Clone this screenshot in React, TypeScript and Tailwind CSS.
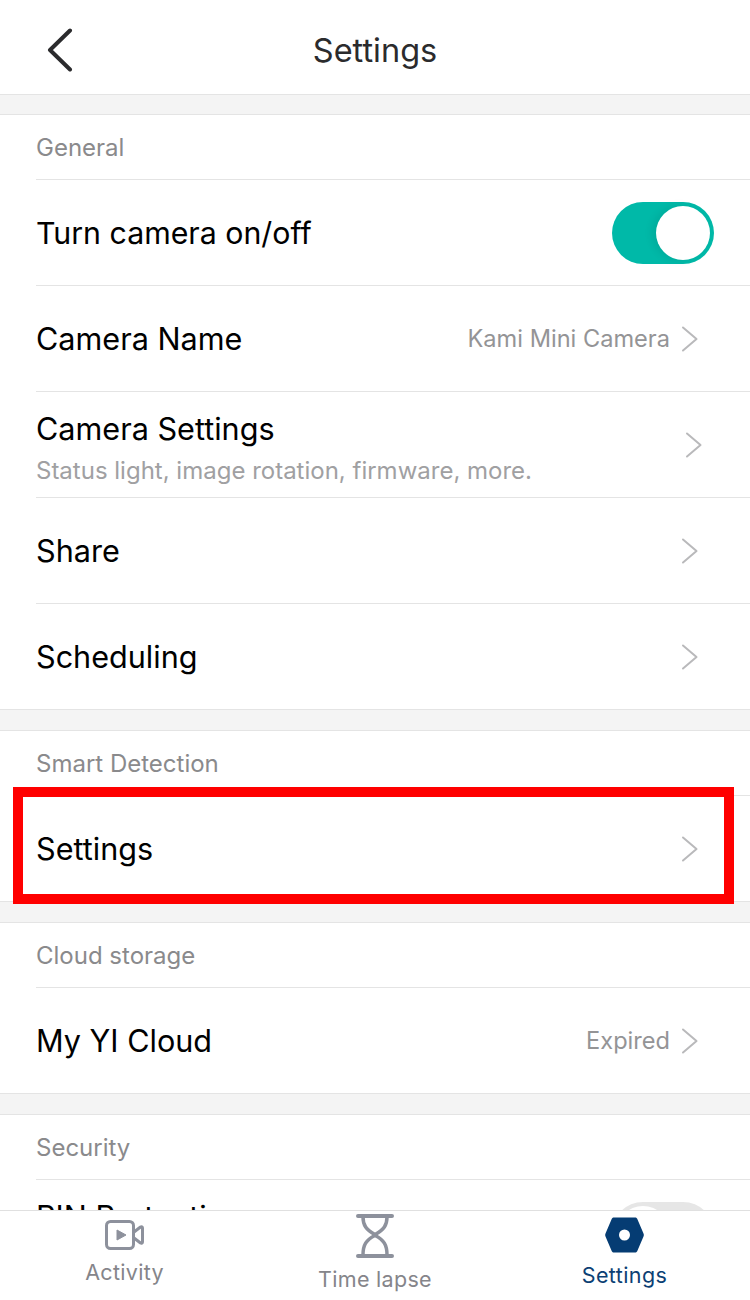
import { ReactNode } from 'react';

function Chevron() {
  return (
    <svg width="18" height="26" viewBox="0 0 18 26" fill="none" className="shrink-0">
      <path d="M2 1.5 15.5 13 2 24.5" stroke="#b9b9bb" strokeWidth="2" strokeLinecap="round" strokeLinejoin="round" />
    </svg>
  );
}

function SectionLabel({ children }: { children: ReactNode }) {
  return (
    <div className="ml-[36px] flex h-[65px] items-center border-b border-[#e4e4e4] pt-[2px] text-[24px] text-[#8a8a8c]">
      {children}
    </div>
  );
}

function Row({
  title,
  value,
  sub,
  last,
}: {
  title: string;
  value?: string;
  sub?: string;
  last?: boolean;
}) {
  return (
    <div className={`ml-[36px] flex items-center pr-[51px] ${last ? 'h-[105px]' : 'h-[106px] border-b border-[#e4e4e4]'}`}>
      <div className={`min-w-0 flex-1 ${sub ? 'pt-[6px]' : ''}`}>
        <div className="text-[30.6px] leading-[38px] text-black">{title}</div>
        {sub && <div className="mt-[8px] text-[24px] leading-[30px] text-[#a0a0a2]">{sub}</div>}
      </div>
      {value && <span className="mr-[11px] text-[23.6px] text-[#949496]">{value}</span>}
      <span className={sub ? 'translate-x-[4px]' : ''}>
        <Chevron />
      </span>
    </div>
  );
}

function Gap({ first }: { first?: boolean }) {
  return <div className={`${first ? 'h-[21px]' : 'h-[22px]'} border-y border-[#e4e4e4] bg-[#f4f4f4]`} />;
}

export default function App() {
  return (
    <div className="relative h-[1300px] w-[750px] overflow-hidden bg-white font-['Inter','Noto_Sans',sans-serif]">
      <header className="relative flex h-[94px] items-center justify-center">
        <svg width="28" height="44" viewBox="0 0 28 44" fill="none" className="absolute left-[47px] top-[28px]">
          <path d="M23 4 3 23.5 23 43" transform="translate(0 -1.5)" stroke="#2b2b2d" strokeWidth="4" strokeLinecap="round" strokeLinejoin="round" />
        </svg>
        <h1 className="mt-[8px] text-[32.5px] font-normal text-[#2b2b2d]">Settings</h1>
      </header>
      <Gap first />

      <SectionLabel>General</SectionLabel>
      <div className="ml-[36px] flex h-[106px] items-center justify-between border-b border-[#e4e4e4] pr-[36px]">
        <span className="pt-[2px] text-[30.3px] text-black">Turn camera on/off</span>
        <div className="flex h-[62px] w-[102px] items-center justify-end rounded-full bg-[#00b9a8] pr-[4px]">
          <div className="h-[54px] w-[54px] rounded-full bg-white shadow-[-4px_0_8px_rgba(0,0,0,0.08)]" />
        </div>
      </div>
      <Row title="Camera Name" value="Kami Mini Camera" />
      <Row title="Camera Settings" sub="Status light, image rotation, firmware, more." />
      <Row title="Share" />
      <Row title="Scheduling" last />
      <Gap />

      <SectionLabel>Smart Detection</SectionLabel>
      <Row title="Settings" last />
      <Gap />

      <SectionLabel>Cloud storage</SectionLabel>
      <Row title="My YI Cloud" value="Expired" last />
      <Gap />

      <SectionLabel>Security</SectionLabel>
      <div className="ml-[36px] flex h-[106px] items-center justify-between pr-[36px]">
        <div className="pt-[6px]">
          <div className="text-[30.6px] leading-[38px] text-black">PIN Protection</div>
          <div className="mt-[8px] h-[30px]" />
        </div>
        <div className="flex h-[62px] w-[102px] items-center rounded-full bg-[#e6e6e6] pl-[4px]">
          <div className="h-[54px] w-[54px] rounded-full bg-white" />
        </div>
      </div>

      {/* red highlight drawn over the screenshot */}
      <div className="absolute left-[13px] top-[787px] h-[117px] w-[721px] border-[10px] border-[#ff0000]" />

      <nav className="absolute bottom-0 left-0 grid h-[90px] w-full grid-cols-3 border-t border-[#e0e0e0] bg-white">
        <div className="flex flex-col items-center pr-[1px] pt-[9px]">
          <svg width="39" height="30" viewBox="0 0 39 30" fill="none">
            <rect x="1.5" y="1.5" width="27" height="27" rx="4" stroke="#8d919c" strokeWidth="3" />
            <path d="M12 10 21 15 12 20Z" fill="#8d919c" stroke="#8d919c" strokeLinejoin="round" />
            <path d="M29 12 35.5 7C36.5 6.5 37.5 7 37.5 8V22C37.5 23 36.5 23.5 35.5 23L29 18" stroke="#8d919c" strokeWidth="3" strokeLinejoin="round" />
          </svg>
          <span className="mt-[9px] text-[21.5px] leading-[26px] tracking-[0.3px] text-[#85858a]">Activity</span>
        </div>
        <div className="flex flex-col items-center pt-[2px]">
          <svg width="38" height="46" viewBox="0 0 38 46" fill="none">
            <path d="M2 3H36M2 43H36" stroke="#8d919c" strokeWidth="4" strokeLinecap="round" />
            <path d="M7 4C7 12 10 17 19 21.5C28 17 31 12 31 4M7 42C7 32 10 27 19 22.5C28 27 31 32 31 42" stroke="#8d919c" strokeWidth="3.5" />
          </svg>
          <span className="mt-[7px] text-[21.5px] leading-[26px] tracking-[0.3px] text-[#85858a]">Time lapse</span>
        </div>
        <div className="flex flex-col items-center pr-[1px] pt-[6px]">
          <svg width="39" height="36" viewBox="0 0 39 36" fill="none">
            <path d="M9 0.5H30C31 0.5 31.7 1 32.2 1.8L38.5 16.5C39 17.5 39 18.5 38.5 19.5L32.2 34.2C31.7 35 31 35.5 30 35.5H9C8 35.5 7.3 35 6.8 34.2L0.5 19.5C0 18.5 0 17.5 0.5 16.5L6.8 1.8C7.3 1 8 0.5 9 0.5Z" fill="#053c73" />
            <circle cx="19.5" cy="18" r="5.5" fill="white" />
          </svg>
          <span className="mt-[9px] text-[21.5px] leading-[26px] tracking-[0.4px] text-[#0c3f74]">Settings</span>
        </div>
      </nav>
    </div>
  );
}
